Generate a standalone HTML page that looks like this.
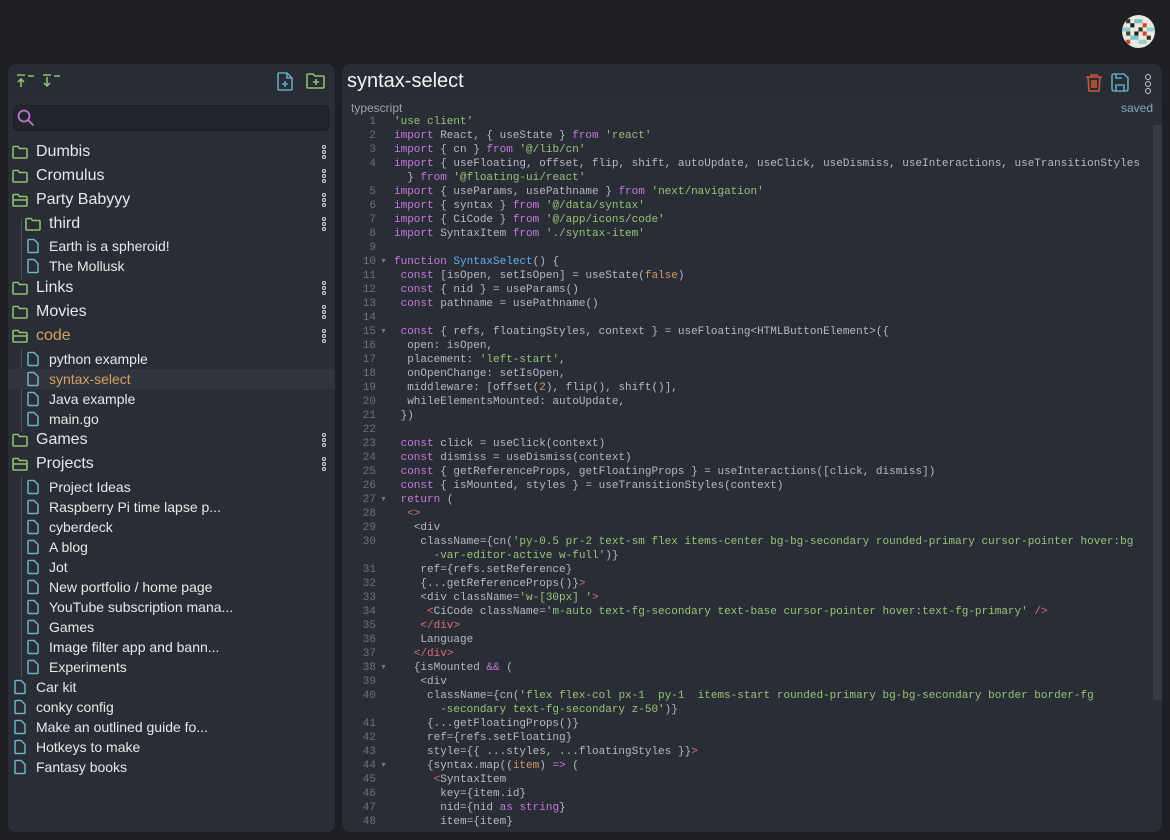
<!DOCTYPE html>
<html><head><meta charset="utf-8"><style>
*{margin:0;padding:0;box-sizing:border-box}
body{width:1170px;height:840px;background:#1d1f24;font-family:"Liberation Sans",sans-serif;color:#e8e8e8;position:relative;overflow:hidden}
.panel{position:absolute;background:#282c34;border-radius:8px}
.row{position:absolute;left:0;right:0;height:20px;display:flex;align-items:center;white-space:nowrap}
.f{font-size:16px}
.s{font-size:14px}
.ic{position:absolute;top:50%;transform:translateY(-50%)}
.dots{position:absolute;right:9px;top:50%;transform:translateY(-50%);width:4px}
.dots i{display:block;width:4px;height:4px;border:1px solid #ddd;border-radius:50%;margin:1px 0}
.ln{position:absolute;left:350px;width:26px;text-align:right;color:#6b717d;height:14px;line-height:14px;font-size:11px;font-family:"Liberation Mono",monospace}
.cl{position:absolute;left:394px;height:14px;line-height:14px;white-space:pre;font-family:"Liberation Mono",monospace;font-size:11px;color:#b3bac6}
.k{color:#c678dd}.st{color:#98c379}.fn{color:#61afef}.n{color:#d19a66}.t{color:#e06c75}
.fold{position:absolute;left:380px;font-size:7px;color:#777;line-height:14px}
</style></head><body>

<svg style="position:absolute;left:1122px;top:15px" width="33" height="33" viewBox="0 0 8 8"><defs><clipPath id="c"><circle cx="4" cy="4" r="4"/></clipPath></defs><g clip-path="url(#c)"><rect width="8" height="8" fill="#e8eadf"/><rect x="1" y="1" width="1" height="1" fill="#333"/><rect x="3" y="1" width="2" height="1" fill="#7cc3c9"/><rect x="5" y="2" width="1" height="1" fill="#d3452f"/><rect x="2" y="2" width="1" height="1" fill="#222"/><rect x="0" y="3" width="2" height="1" fill="#8fc9cc"/><rect x="4" y="3" width="1" height="1" fill="#333"/><rect x="6" y="3" width="2" height="1" fill="#9cd0d0"/><rect x="1" y="4" width="1" height="1" fill="#444"/><rect x="3" y="4" width="1" height="1" fill="#222"/><rect x="5" y="4" width="1" height="1" fill="#d3452f"/><rect x="2" y="5" width="2" height="1" fill="#7cc3c9"/><rect x="6" y="5" width="1" height="1" fill="#333"/><rect x="1" y="6" width="1" height="1" fill="#d3452f"/><rect x="4" y="6" width="2" height="1" fill="#9cd0d0"/></g></svg>

<div class="panel" style="left:8px;top:64px;width:327px;height:768px">
 <svg style="position:absolute;left:8px;top:9px" width="20" height="16" viewBox="0 0 20 16" fill="none" stroke="#8fbf6f" stroke-width="1.6"><path d="M1 2h8M12 3h6M5 14V6M2 9l3-3 3 3"/></svg>
 <svg style="position:absolute;left:34px;top:9px" width="20" height="16" viewBox="0 0 20 16" fill="none" stroke="#8fbf6f" stroke-width="1.6"><path d="M1 2h8M12 3h6M5 4v9M2 10l3 3 3-3"/></svg>
 <svg style="position:absolute;left:269px;top:7px" width="17" height="21" viewBox="0 0 17 21" fill="none" stroke="#5fa8bd" stroke-width="1.6"><path d="M2 2h8l5 5v11a1 1 0 0 1-1 1H2a1 1 0 0 1-1-1V3a1 1 0 0 1 1-1zM10 2v5h5M8 10v6M5 13h6"/></svg>
 <svg style="position:absolute;left:298px;top:8px" width="20" height="18" viewBox="0 0 20 18" fill="none" stroke="#8fbf6f" stroke-width="1.6"><path d="M1 3a1 1 0 0 1 1-1h5l2 2h8a1 1 0 0 1 1 1v10a1 1 0 0 1-1 1H2a1 1 0 0 1-1-1zM10 7v6M7 10h6"/></svg>
 <div style="position:absolute;left:0;right:0;top:36px;bottom:0;background:#292d35;border-radius:0 0 8px 8px"></div>
 <div style="position:absolute;left:5px;top:41px;width:316px;height:26px;background:#21252b;border:1px solid #1c1f24;border-radius:5px"></div>
 <svg style="position:absolute;left:9px;top:45px" width="18" height="18" viewBox="0 0 18 18" fill="none" stroke="#c46fd6" stroke-width="1.8"><circle cx="7" cy="7" r="5.5"/><path d="M11 11l5.5 5.5"/></svg>
 <div style="position:absolute;left:13px;top:155px;width:1px;height:60px;background:#4a4f59"></div>
 <div style="position:absolute;left:13px;top:285px;width:1px;height:82px;background:#4a4f59"></div>
 <div style="position:absolute;left:13px;top:413px;width:1px;height:200px;background:#4a4f59"></div>
 <div style="position:absolute;left:0;right:0;top:305px;height:20px;background:#30343d"></div>
</div>

<div id="tree" style="position:absolute;left:8px;top:1px;width:327px;height:839px"></div>

<div class="panel" style="left:342px;top:64px;width:820px;height:768px">
 <div style="position:absolute;left:0;right:0;top:37px;bottom:0;background:#292d35;border-radius:0 0 8px 8px"></div>
 <div style="position:absolute;left:5px;top:6px;font-size:20px;color:#f2f2f2">syntax-select</div>
 <div style="position:absolute;left:9px;top:37px;font-size:12px;color:#9aa0aa">typescript</div>
 <div style="position:absolute;right:9px;top:37px;font-size:12px;color:#7eaab8">saved</div>
 <svg style="position:absolute;left:743px;top:9px" width="18" height="20" viewBox="0 0 18 20" fill="none" stroke="#c8553a" stroke-width="1.6"><path d="M1 4h16M6 4V2h6v2M3 4l1 14h10l1-14M7 7v8M9 7v8M11 7v8"/></svg>
 <svg style="position:absolute;left:769px;top:9px" width="18" height="19" viewBox="0 0 18 19" fill="none" stroke="#5fa8bd" stroke-width="1.6"><path d="M2 1h11l4 4v11a2 2 0 0 1-2 2H3a2 2 0 0 1-2-2V3a2 2 0 0 1 1-2zM5 18v-6h8v6M5 1v4h6"/></svg>
 <div style="position:absolute;left:803px;top:10px;width:6px"><i style="display:block;width:6px;height:6px;border:1.5px solid #ccc;border-radius:50%;margin-bottom:1px"></i><i style="display:block;width:6px;height:6px;border:1.5px solid #ccc;border-radius:50%;margin-bottom:1px"></i><i style="display:block;width:6px;height:6px;border:1.5px solid #ccc;border-radius:50%"></i></div>
 <div style="position:absolute;left:811px;top:61px;width:9px;height:575px;background:#353a44"></div>
</div>
<div id="code"></div>

<script>
const F='<svg class="ic" style="left:LEFTpx" width="16" height="14" viewBox="0 0 16 14" fill="none" stroke="#8fbf6f" stroke-width="1.6"><path d="M1 2.5a1 1 0 0 1 1-1h4l1.5 2H14a1 1 0 0 1 1 1V12a1 1 0 0 1-1 1H2a1 1 0 0 1-1-1z"/></svg>';
const O='<svg class="ic" style="left:LEFTpx" width="16" height="14" viewBox="0 0 16 14" fill="none" stroke="#8fbf6f" stroke-width="1.6"><path d="M1 2.5a1 1 0 0 1 1-1h4l1.5 2H14a1 1 0 0 1 1 1V12a1 1 0 0 1-1 1H2a1 1 0 0 1-1-1zM1 7h14"/></svg>';
const D='<svg class="ic" style="left:LEFTpx" width="12" height="15" viewBox="0 0 12 15" fill="none" stroke="#6cb4c6" stroke-width="1.5"><path d="M2 1h5l4 4v8a1 1 0 0 1-1 1H2a1 1 0 0 1-1-1V2a1 1 0 0 1 1-1z"/></svg>';
const items=[
[151,'F',0,'Dumbis',1],[175,'F',0,'Cromulus',1],[199,'O',0,'Party Babyyy',1],[223,'F',1,'third',1],
[245,'D',1,'Earth is a spheroid!'],[265,'D',1,'The Mollusk'],[287,'F',0,'Links',1],[311,'F',0,'Movies',1],
[335,'O',0,'code',1,'#d7a05f'],[358,'D',1,'python example'],[378,'D',1,'syntax-select',0,'#d7a05f'],[398,'D',1,'Java example'],[418,'D',1,'main.go'],
[439,'F',0,'Games',1],[463,'O',0,'Projects',1],[486,'D',1,'Project Ideas'],[506,'D',1,'Raspberry Pi time lapse p...'],[526,'D',1,'cyberdeck'],[546,'D',1,'A blog'],[566,'D',1,'Jot'],[586,'D',1,'New portfolio / home page'],[606,'D',1,'YouTube subscription mana...'],[626,'D',1,'Games'],[646,'D',1,'Image filter app and bann...'],[666,'D',1,'Experiments'],
[686,'D',0,'Car kit'],[706,'D',0,'conky config'],[726,'D',0,'Make an outlined guide fo...'],[746,'D',0,'Hotkeys to make'],[766,'D',0,'Fantasy books']];
let h='';
for(const [y,t,ind,txt,dots,col] of items){
 const folder=t!=='D';
 const iconLeft=(folder?4:6)+ind*13;
 const icon=(t==='F'?F:t==='O'?O:D).replace('LEFT',iconLeft);
 h+=`<div class="row ${folder?'f':'s'}" style="top:${y-10}px">${icon}<span style="position:absolute;left:${28+ind*13}px;${col?'color:'+col:''}">${txt}</span>${dots?'<div class="dots"><i></i><i></i><i></i></div>':''}</div>`;
}
document.getElementById('tree').innerHTML=h;

const e=s=>s.replace(/&/g,'&amp;').replace(/</g,'&lt;').replace(/>/g,'&gt;');
const K=s=>'<span class="k">'+e(s)+'</span>',S=s=>'<span class="st">'+e(s)+'</span>',B=s=>'<span class="fn">'+e(s)+'</span>',N=s=>'<span class="n">'+e(s)+'</span>',T=s=>'<span class="t">'+e(s)+'</span>',P=s=>e(s);
const L=[
[1,S("'use client'")],
[2,K('import')+P(' React, { useState } ')+K('from')+' '+S("'react'")],
[3,K('import')+P(' { cn } ')+K('from')+' '+S("'@/lib/cn'")],
[4,K('import')+P(' { useFloating, offset, flip, shift, autoUpdate, useClick, useDismiss, useInteractions, useTransitionStyles')],
[0,P('  } ')+K('from')+' '+S("'@floating-ui/react'")],
[5,K('import')+P(' { useParams, usePathname } ')+K('from')+' '+S("'next/navigation'")],
[6,K('import')+P(' { syntax } ')+K('from')+' '+S("'@/data/syntax'")],
[7,K('import')+P(' { CiCode } ')+K('from')+' '+S("'@/app/icons/code'")],
[8,K('import')+P(' SyntaxItem ')+K('from')+' '+S("'./syntax-item'")],
[9,''],
[10,K('function')+' '+B('SyntaxSelect')+P('() {'),1],
[11,' '+K('const')+P(' [isOpen, setIsOpen] = useState(')+N('false')+')'],
[12,' '+K('const')+P(' { nid } = useParams()')],
[13,' '+K('const')+P(' pathname = usePathname()')],
[14,''],
[15,' '+K('const')+P(' { refs, floatingStyles, context } = useFloating<HTMLButtonElement>({'),1],
[16,P('  open: isOpen,')],
[17,P('  placement: ')+S("'left-start'")+','],
[18,P('  onOpenChange: setIsOpen,')],
[19,P('  middleware: [offset(')+N('2')+P('), flip(), shift()],')],
[20,P('  whileElementsMounted: autoUpdate,')],
[21,P(' })')],
[22,''],
[23,' '+K('const')+P(' click = useClick(context)')],
[24,' '+K('const')+P(' dismiss = useDismiss(context)')],
[25,' '+K('const')+P(' { getReferenceProps, getFloatingProps } = useInteractions([click, dismiss])')],
[26,' '+K('const')+P(' { isMounted, styles } = useTransitionStyles(context)')],
[27,' '+K('return')+P(' ('),1],
[28,'  '+T('<>')],
[29,P('   <div')],
[30,P('    className={cn(')+S("'py-0.5 pr-2 text-sm flex items-center bg-bg-secondary rounded-primary cursor-pointer hover:bg")],
[0,S("      -var-editor-active w-full'")+P(')}')],
[31,P('    ref={refs.setReference}')],
[32,P('    {...getReferenceProps()}')+T('>')],
[33,P('    <div className=')+S("'w-[30px] '")+T('>')],
[34,P('     ')+T('<')+P('CiCode className=')+S("'m-auto text-fg-secondary text-base cursor-pointer hover:text-fg-primary'")+' '+T('/>')],
[35,'    '+T('</div>')],
[36,P('    Language')],
[37,'   '+T('</div>')],
[38,P('   {isMounted ')+K('&&')+P(' ('),1],
[39,P('    <div')],
[40,P('     className={cn(')+S("'flex flex-col px-1  py-1  items-start rounded-primary bg-bg-secondary border border-fg")],
[0,S("       -secondary text-fg-secondary z-50'")+P(')}')],
[41,P('     {...getFloatingProps()}')],
[42,P('     ref={refs.setFloating}')],
[43,P('     style={{ ...styles, ...floatingStyles }}')+T('>')],
[44,P('     {syntax.map((')+N('item')+P(') ')+K('=>')+P(' ('),1],
[45,P('      ')+T('<')+P('SyntaxItem')],
[46,P('       key={item.id}')],
[47,P('       nid={nid ')+K('as')+' '+K('string')+'}'],
[48,P('       item={item}')]];
let c='';let y=115;
for(const [n,html,fold] of L){
 if(n)c+=`<div class="ln" style="top:${y}px">${n}</div>`;
 if(fold)c+=`<div class="fold" style="top:${y}px">&#9660;</div>`;
 c+=`<div class="cl" style="top:${y}px">${html}</div>`;
 y+=14;
}
document.getElementById('code').innerHTML=c;
</script>
</body></html>
